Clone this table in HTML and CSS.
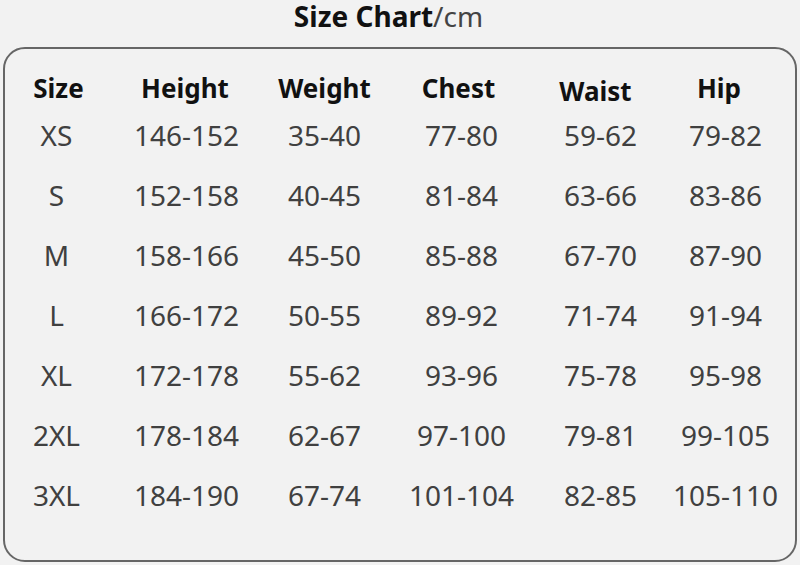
FILE: index.html
```html
<!DOCTYPE html>
<html>
<head>
<meta charset="utf-8">
<link rel="stylesheet" href="styles.css">
</head>
<body>
<h1 class="title"><span class="title-main">Size Chart</span><span class="title-unit">/cm</span></h1>
<div class="chart">
  <div class="grid">
    <div class="th th-size">Size</div>
    <div class="th th-height">Height</div>
    <div class="th th-weight">Weight</div>
    <div class="th th-chest">Chest</div>
    <div class="th th-waist">Waist</div>
    <div class="th th-hip">Hip</div>

    <div class="td">XS</div><div class="td">146-152</div><div class="td">35-40</div><div class="td">77-80</div><div class="td">59-62</div><div class="td">79-82</div>
    <div class="td">S</div><div class="td">152-158</div><div class="td">40-45</div><div class="td">81-84</div><div class="td">63-66</div><div class="td">83-86</div>
    <div class="td">M</div><div class="td">158-166</div><div class="td">45-50</div><div class="td">85-88</div><div class="td">67-70</div><div class="td">87-90</div>
    <div class="td">L</div><div class="td">166-172</div><div class="td">50-55</div><div class="td">89-92</div><div class="td">71-74</div><div class="td">91-94</div>
    <div class="td">XL</div><div class="td">172-178</div><div class="td">55-62</div><div class="td">93-96</div><div class="td">75-78</div><div class="td">95-98</div>
    <div class="td">2XL</div><div class="td">178-184</div><div class="td">62-67</div><div class="td">97-100</div><div class="td">79-81</div><div class="td">99-105</div>
    <div class="td">3XL</div><div class="td">184-190</div><div class="td">67-74</div><div class="td">101-104</div><div class="td">82-85</div><div class="td">105-110</div>
  </div>
</div>
</body>
</html>
```
FILE: styles.css
```css
html, body {
  margin: 0;
  padding: 0;
  background: #f2f2f2;
}
body {
  width: 800px;
  height: 565px;
  overflow: hidden;
  font-family: "Noto Sans", "Open Sans", "Liberation Sans", sans-serif;
}
.title {
  margin: 0;
  line-height: 32px;
  font-size: 28px;
  text-align: center;
  padding-right: 23px;
}
.title-main {
  font-weight: 700;
  color: #111;
}
.title-unit {
  font-weight: 400;
  color: #444;
}
.chart {
  margin: 15px 3px 0 3px;
  height: 515px;
  border: 2px solid #666;
  border-radius: 22px;
  box-sizing: border-box;
  padding-top: 21.5px;
}
.grid {
  display: grid;
  grid-template-columns: 103px 157px 119px 155px 123px 127px;
  grid-auto-rows: 60px;
  grid-template-rows: 34px;
}
.th {
  font-size: 26px;
  font-weight: 700;
  color: #111;
  line-height: 34px;
  text-align: center;
}
.th-size { padding-left: 4px; }
.th-height { padding-right: 3px; }
.th-chest { padding-right: 6px; }
.th-waist { padding-right: 10px; padding-top: 3px; }
.th-hip { padding-right: 13px; }
.td {
  font-size: 28px;
  font-weight: 400;
  color: #404040;
  line-height: 60px;
  text-align: center;
}
```
